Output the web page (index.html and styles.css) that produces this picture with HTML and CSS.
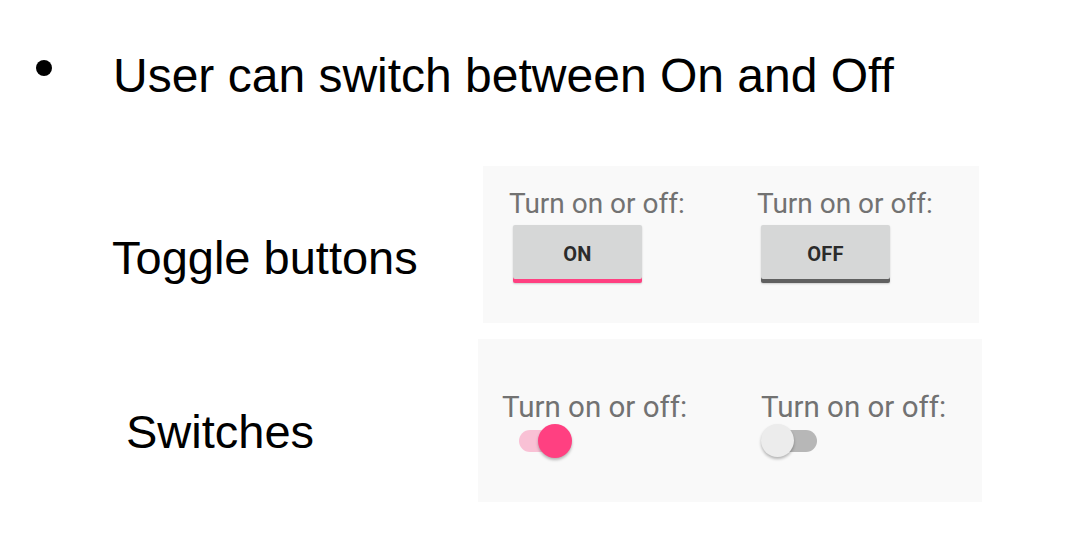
FILE: index.html
```html
<!DOCTYPE html>
<html>
<head>
<meta charset="utf-8">
<link rel="stylesheet" href="styles.css">
</head>
<body>
<div class="slide">
  <div class="bullet-row">
    <span class="dot"></span>
    <h1 class="title">User can switch between On and Off</h1>
  </div>

  <section class="row row-toggle">
    <h2 class="caption caption-toggle">Toggle buttons</h2>
    <div class="panel panel-toggle">
      <div class="item">
        <div class="label">Turn on or off:</div>
        <div class="tbtn tbtn-on">ON</div>
      </div>
      <div class="item">
        <div class="label">Turn on or off:</div>
        <div class="tbtn tbtn-off">OFF</div>
      </div>
    </div>
  </section>

  <section class="row row-switch">
    <h2 class="caption caption-switch">Switches</h2>
    <div class="panel panel-switch">
      <div class="item">
        <div class="label label-lg">Turn on or off:</div>
        <div class="switch switch-on"><span class="track"></span><span class="thumb"></span></div>
      </div>
      <div class="item">
        <div class="label label-lg">Turn on or off:</div>
        <div class="switch switch-off"><span class="track"></span><span class="thumb"></span></div>
      </div>
    </div>
  </section>
</div>
</body>
</html>
```

FILE: styles.css
```css
* { box-sizing: border-box; }

html, body {
  margin: 0;
  padding: 0;
  background: #ffffff;
}

body {
  width: 1076px;
  height: 548px;
  overflow: hidden;
  font-family: "Liberation Sans", Arial, sans-serif;
  color: #000;
}

.slide {
  padding: 49px 0 0 36px;
}

.bullet-row {
  display: flex;
  align-items: flex-start;
}

.dot {
  width: 16px;
  height: 16px;
  border-radius: 50%;
  background: #000;
  margin-top: 11px;
  flex: none;
}

.title {
  margin: 0 0 0 61px;
  font-size: 48px;
  font-weight: normal;
  line-height: 54px;
}

.row {
  display: flex;
  align-items: flex-start;
}

.row-toggle { margin-top: 63px; }
.row-switch { margin-top: 16px; }

.caption {
  margin: 0;
  font-size: 47px;
  font-weight: normal;
  line-height: 52px;
  flex: none;
  white-space: nowrap;
}

.caption-toggle {
  margin-left: 76px;
  margin-top: 66px;
  width: 371px;
}

.caption-switch {
  margin-left: 90px;
  margin-top: 67px;
  width: 352px;
}

.panel {
  background: #f9f9f9;
  display: grid;
  font-family: Roboto, "Noto Sans", sans-serif;
}

.panel-toggle {
  width: 496px;
  height: 157px;
  padding: 23px 0 0 26px;
  grid-template-columns: 248px 1fr;
}

.panel-switch {
  width: 504px;
  height: 163px;
  padding: 52px 0 0 24px;
  grid-template-columns: 259px 1fr;
}

.item {
  display: flex;
  flex-direction: column;
  align-items: flex-start;
}

.label {
  font-size: 28px;
  line-height: 30px;
  color: #727272;
  white-space: nowrap;
}

.label-lg {
  font-size: 29.5px;
  line-height: 32px;
}

.tbtn {
  margin: 6px 0 0 4px;
  width: 129px;
  height: 58px;
  border-radius: 2px;
  background: #d6d7d7;
  display: flex;
  align-items: center;
  justify-content: center;
  font-size: 20px;
  font-weight: 700;
  color: #2b2b2b;
  letter-spacing: 0.3px;
}

.tbtn-on {
  box-shadow: inset 0 -4px 0 #ff4081, 0 1px 2px rgba(0, 0, 0, 0.18);
}

.tbtn-off {
  box-shadow: inset 0 -4px 0 #606060, 0 1px 2px rgba(0, 0, 0, 0.18);
}

.switch {
  position: relative;
  width: 56px;
  height: 34px;
  margin-top: 1px;
}

.track {
  position: absolute;
  top: 6px;
  width: 47px;
  height: 22px;
  border-radius: 11px;
}

.thumb {
  position: absolute;
  top: 0;
  width: 34px;
  height: 34px;
  border-radius: 50%;
  box-shadow: 0 2px 3px rgba(0, 0, 0, 0.28);
}

.switch-on { margin-left: 17px; }
.switch-on .track { left: 0; background: #f9c1d5; }
.switch-on .thumb { left: 19px; background: #ff4081; }

.switch-off { margin-left: 0; }
.switch-off .track { left: 9px; background: #b7b7b7; }
.switch-off .thumb { left: 0; width: 33px; height: 33px; background: #ececec; }
```
